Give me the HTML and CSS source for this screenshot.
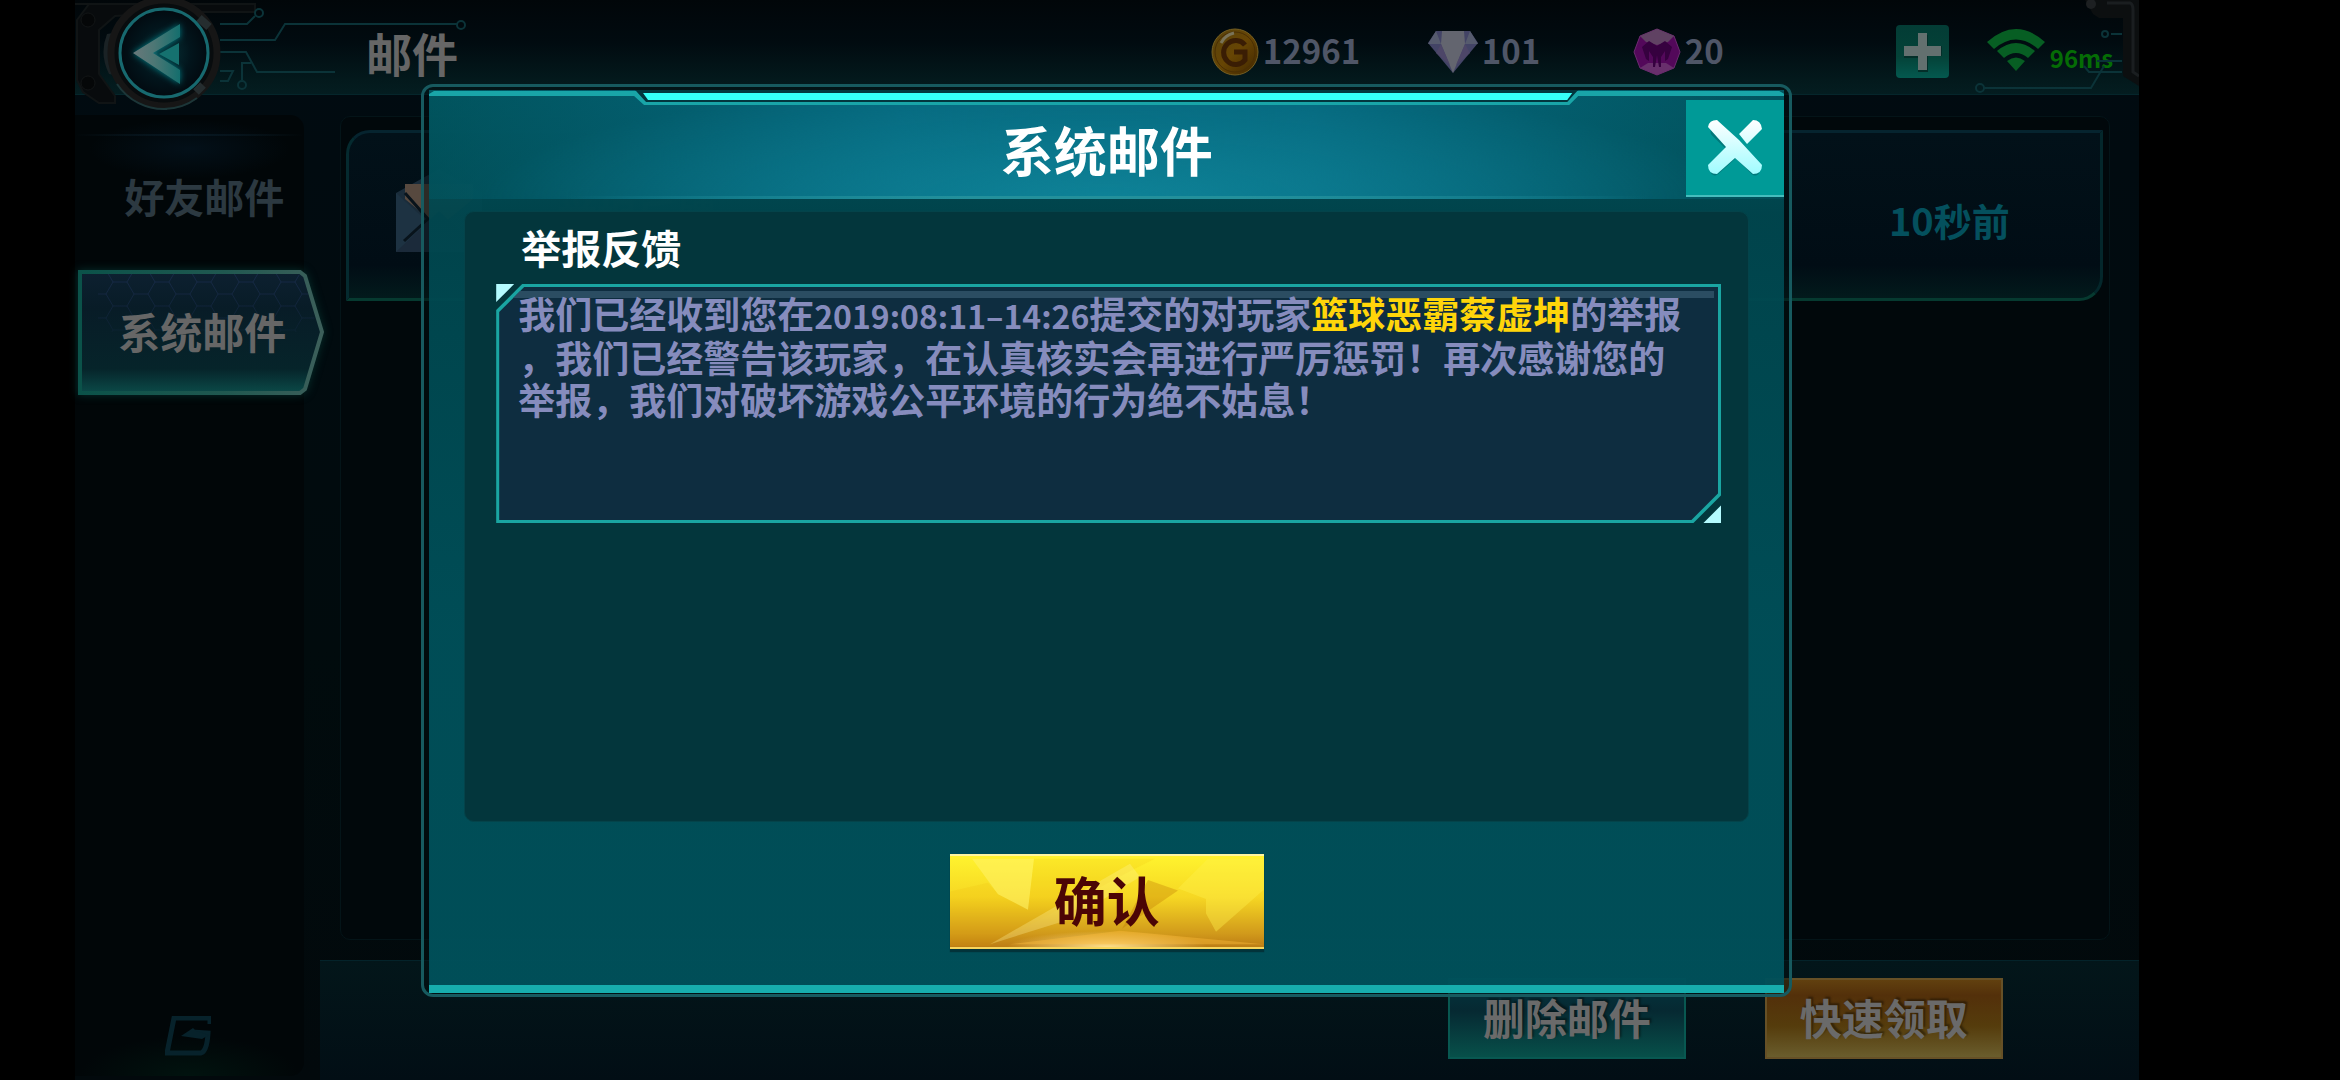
FILE: index.html
```html
<!DOCTYPE html>
<html lang="zh-CN">
<head>
<meta charset="utf-8">
<title>邮件</title>
<link rel="stylesheet" href="styles.css">
</head>
<body>
<div class="stage">
  <header class="topbar">
    <svg class="circuit" width="400" height="120" viewBox="0 0 400 120" fill="none" aria-hidden="true">
      <path d="M0 4H180V12H100L40 16L24 30V74L40 96V103H24L8 92L2 80V20L14 4Z" fill="#080b0d" stroke="#101415" stroke-width="2"/>
      <circle cx="13" cy="20" r="7" fill="#050708" stroke="#121516"/><circle cx="13" cy="83" r="7" fill="#050708" stroke="#121516"/>
      <path d="M145 24H172L180 16M145 40H200L210 24H382M145 52H171L182 72H260M176 63H167V80M145 71H158L153 81H145" stroke="#0b3338" stroke-width="2"/>
      <circle cx="184" cy="13" r="4" stroke="#0b3338" stroke-width="2"/><circle cx="386" cy="25" r="4" stroke="#0b3338" stroke-width="2"/><circle cx="167" cy="85" r="4" stroke="#0b3338" stroke-width="2"/>
    </svg>
    <button class="back" aria-label="返回">
      <svg width="124" height="112" viewBox="25 0 124 112" aria-hidden="true">
        <defs>
          <linearGradient id="arrow"><stop offset="0" stop-color="#69787a"/><stop offset=".45" stop-color="#4d7775"/><stop offset="1" stop-color="#146e6d"/></linearGradient>
          <radialGradient id="disc"><stop offset="0" stop-color="#06343a"/><stop offset=".6" stop-color="#02151c"/><stop offset="1" stop-color="#020a10"/></radialGradient>
          <filter id="glow" x="-30%" y="-30%" width="160%" height="160%"><feGaussianBlur stdDeviation="3"/></filter>
        </defs>
        <path d="M42 32L30 34Q22 54 32 74L42 76Z" fill="#1a2225"/>
        <circle cx="87" cy="53" r="53" fill="#080c0e" stroke="#161616" stroke-width="7"/>
        <path d="M87 109A56 56 0 0 0 120 98M40 84A56 56 0 0 0 90 109" fill="none" stroke="#1c3638" stroke-width="2"/>
        <path d="M122 18L132 27M119 92L126 85" stroke="#252d2f" stroke-width="8"/>
        <circle cx="87" cy="53" r="44" fill="url(#disc)" stroke="#17696f" stroke-width="3"/>
        <path d="M56 53L103 24V37L76 53L103 70V84Z" fill="#0a7c82" filter="url(#glow)"/>
        <path d="M56 53L103 24V37L76 53L103 70V84Z" fill="url(#arrow)"/>
        <path d="M82 54L102 43V65Z" fill="#15716f"/>
      </svg>
    </button>
    <h1 class="page-title">邮件</h1>
    <div class="stats">
      <div class="stat">
        <svg width="48" height="48" viewBox="0 0 48 48" aria-hidden="true">
          <defs><linearGradient id="coin" x2="1" y2="1"><stop offset="0" stop-color="#57430d"/><stop offset=".5" stop-color="#674504"/><stop offset="1" stop-color="#3f2600"/></linearGradient></defs>
          <circle cx="24" cy="24" r="23" fill="url(#coin)" stroke="#755f22"/><circle cx="24" cy="24" r="20" fill="none" stroke="#4a2f04"/>
          <path d="M34 17A12 12 0 1 0 34 32V24H23" fill="none" stroke="#3a1d04" stroke-width="5"/>
          <path d="M10 15Q14 7 23 5" fill="none" stroke="#797359" stroke-width="3"/>
        </svg>
        <span>12961</span>
      </div>
      <div class="stat">
        <svg width="50" height="42" viewBox="0 0 50 42" aria-hidden="true">
          <path d="M0 12L8 0H42L50 12L25 42Z" fill="#434466"/><path d="M14 0H36L37 13L25 42L13 13Z" fill="#63656f"/><path d="M8 0L13 13H0ZM42 0L37 13H50Z" fill="#565b6e"/><path d="M13 13L22 34L8 22ZM37 13L28 34L42 22Z" fill="#4d4668"/>
        </svg>
        <span>101</span>
      </div>
      <div class="stat">
        <svg width="48" height="48" viewBox="0 0 48 48" aria-hidden="true">
          <path d="M24 1L41 8L47 24L41 40L24 47L7 40L1 24L7 8Z" fill="#53085a" stroke="#6c2a70"/><path d="M24 1L41 8L35 14L24 17L13 14L7 8Z" fill="#604263"/><path d="M7 40L15 35H33L41 40L24 47Z" fill="#682f6c"/>
          <path d="M24 18L32 13L39 19L35 31L32 33V23L28 29V39H26L24 27L22 39H20V29L16 23V33L13 31L9 19L16 13Z" fill="#36013f"/>
        </svg>
        <span>20</span>
      </div>
      <button class="plus" aria-label="充值">
        <svg width="53" height="53" viewBox="0 0 53 53" aria-hidden="true"><path d="M22 10H32V21H46V31H32V47H22V33H8V24H22Z" fill="#032f29"/><path d="M22 8H31V21H45V31H31V45H22V31H8V21H22Z" fill="#63706f"/></svg>
      </button>
      <div class="signal">
        <svg width="58" height="42" viewBox="0 0 58 42" aria-hidden="true"><path d="M0 13Q29-13 58 13L51 20Q29 1 7 20ZM10 22Q29 6 48 22L41 29Q29 19 17 29ZM20 32Q29 25 38 32L29 42Z" fill="#075e23"/></svg>
        <span>96ms</span>
      </div>
    </div>
    <svg class="corner" width="170" height="95" viewBox="0 0 170 95" fill="none" aria-hidden="true">
      <path d="M15 88H122L135 66M142 34H153M115 66L120 72H153M128 61H153" stroke="#0b3338" stroke-width="2"/><circle cx="11" cy="88" r="4" stroke="#0b3338" stroke-width="2"/><circle cx="136" cy="34" r="3" stroke="#0b3338" stroke-width="2"/>
      <path d="M116 0H170V86L154 76V18H130L124 14Z" fill="#0c0f10"/><path d="M138 3H161Q164 4 164 10V72L170 76" stroke="#1a1e20" stroke-width="3"/><circle cx="122" cy="4" r="5" fill="#1d2022"/>
    </svg>
  </header>

  <div class="body">
    <nav class="sidebar">
      <a class="tab" href="#friends">好友邮件</a>
      <a class="tab tab-active" href="#system" aria-current="page">
        <svg viewBox="0 0 246 125" preserveAspectRatio="none" aria-hidden="true">
          <defs>
            <linearGradient id="tabfill" x2="0" y2="1"><stop offset="0" stop-color="#0d2030"/><stop offset=".3" stop-color="#081c27"/><stop offset=".8" stop-color="#06242a"/><stop offset="1" stop-color="#0b4a48"/></linearGradient>
            <linearGradient id="tabedge"><stop offset="0" stop-color="#0b5249"/><stop offset=".6" stop-color="#205850"/><stop offset="1" stop-color="#3c5f5a"/></linearGradient>
            <pattern id="hex" width="42" height="24" patternUnits="userSpaceOnUse"><path d="M0 12H7L14 0H28L35 12H42M7 12L14 24H28L35 12" fill="none" stroke="#182a48"/></pattern>
            <linearGradient id="fade" x2="0" y2="1"><stop offset="0" stop-color="#fff"/><stop offset=".7" stop-color="#000"/></linearGradient>
            <mask id="hexmask"><rect width="246" height="125" fill="url(#fade)"/></mask>
          </defs>
          <path d="M2 2H222L227 6L244 62L227 119L222 123H2Z" fill="url(#tabfill)"/>
          <path d="M20 4H220L226 8L240 62H20Z" fill="url(#hex)" mask="url(#hexmask)"/>
          <path d="M2 2H222L227 6L244 62L227 119L222 123H2Z" fill="none" stroke="url(#tabedge)" stroke-width="4"/>
        </svg>
        <span>系统邮件</span>
      </a>
      <svg class="mark" width="46" height="40" viewBox="0 0 46 40" fill="none" aria-hidden="true"><path d="M45 8V2H9L2 37H36Q42 35 43 17L27 16" stroke="#07222b" stroke-width="5"/><path d="M16 20L28 12L31 15L44 19L37 23Z" fill="#07222b"/></svg>
    </nav>
    <main class="content">
      <section class="list">
        <article class="mail">
          <svg class="envelope" width="86" height="86" viewBox="0 0 86 86" aria-hidden="true">
            <path d="M0 24L43 0L86 24V83H0Z" fill="#1a2c3a"/><path d="M9 15H77V30L43 58L9 30Z" fill="#57493f"/><path d="M0 24L33 54L0 83Z" fill="#1d3242"/><path d="M86 24L50 54L86 83Z" fill="#1d3242"/><path d="M0 83L43 42L86 83Z" fill="#1b2a3a"/><path d="M9 24L32 50L8 72" fill="none" stroke="#08131b" stroke-width="3"/>
          </svg>
          <h2 class="mail-title">举报反馈</h2>
          <time class="mail-time">10秒前</time>
        </article>
      </section>
      <footer class="actions">
        <button class="action action-delete">删除邮件</button>
        <button class="action action-claim">快速领取</button>
      </footer>
    </main>
  </div>
</div>

<div class="overlay">
  <section class="modal" role="dialog" aria-modal="true" aria-labelledby="dialog-title">
    <div class="modal-inner">
      <svg class="modal-edge" viewBox="0 0 1355 16" preserveAspectRatio="none" aria-hidden="true">
        <path d="M206 0H1149L1139 13H216Z" fill="#02363e"/>
        <path d="M0 6V4L5 1H207L217 12H1138L1148 1H1350L1355 4V6H1149L1140 15H215L205 6Z" fill="#19a5a8"/>
        <path d="M214 3H1143L1138 10H219Z" fill="#36fff8"/>
      </svg>
      <header class="modal-head">
        <h2 id="dialog-title">系统邮件</h2>
        <button class="close" aria-label="关闭">
          <svg width="54" height="56" viewBox="0 0 54 56" aria-hidden="true">
            <defs><linearGradient id="cross" gradientUnits="userSpaceOnUse" x1="0" y1="0" x2="0" y2="54"><stop offset="0" stop-color="#fff"/><stop offset="1" stop-color="#9ffcff"/></linearGradient></defs>
            <path d="M7 12L47 51M7 51L27 33" fill="none" stroke="#00787a" stroke-width="9" stroke-linecap="round"/>
            <path d="M0 7Q1 0 9 0L31 20L54 45Q54 54 45 54L27 38L9 54Q0 54 0 45L18 27ZM31 14L45 0Q53 0 54 9L39 24Z" fill="url(#cross)"/>
          </svg>
        </button>
      </header>
      <div class="letter">
        <h3>举报反馈</h3>
        <div class="message-frame">
          <p class="message">我们已经收到您在<span class="stamp">2019:08:11–14:26</span>提交的对玩家<strong>篮球恶霸蔡虚坤</strong>的举报<br>，我们已经警告该玩家，在认真核实会再进行严厉惩罚！再次感谢您的<br>举报，我们对破坏游戏公平环境的行为绝不姑息！</p>
        </div>
      </div>
      <button class="confirm">
        <svg viewBox="0 0 314 95" preserveAspectRatio="none" aria-hidden="true">
          <path d="M22 3H84L78 56L48 40Z" fill="#fff36a" opacity=".55"/><path d="M0 37L38 28L48 40L78 56L84 3H205L180 16L40 94H0Z" fill="#e8a800" opacity=".13"/>
          <path d="M40 92L180 8L190 22L120 66Z" fill="#fff6a0" opacity=".3"/><path d="M198 25L228 36L172 76Z" fill="#b96e00" opacity=".3"/><path d="M228 34L258 3H314V35L266 79L256 60V45Z" fill="#fff04a" opacity=".4"/><path d="M170 78L314 92H60Z" fill="#ffbf3d" opacity=".4"/>
        </svg>
        <span>确认</span>
      </button>
    </div>
  </section>
</div>
</body>
</html>
```
FILE: styles.css
```css
* {
  box-sizing: border-box;
  margin: 0;
}

body {
  background: #000;
  color: #fff;
  font-family: "Noto Sans CJK SC", "Noto Sans", sans-serif;
  font-weight: 700;
}

button {
  padding: 0;
  border: 0;
  background: none;
  color: inherit;
  font: inherit;
  cursor: pointer;
}

svg {
  display: block;
  flex-shrink: 0;
}

/* Dimmed mail screen */
.stage {
  display: flex;
  flex-direction: column;
  min-height: 100vh;
  margin: 0 8.6% 0 3.2%;
  background: linear-gradient(#010b11, #010b0d 60%, #02090c);
}

.topbar {
  position: relative;
  display: flex;
  align-items: center;
  height: 95px;
  padding: 0 26px 0 27px;
  border-bottom: 1px solid #05262b;
  background: linear-gradient(#010609, #010b10 45%, #03191c 85%, #041d20);
}

.circuit,
.corner {
  position: absolute;
  top: 0;
  left: 0;
}

.corner {
  right: 0;
  left: auto;
}

.back {
  position: relative;
  align-self: flex-start;
  width: 124px;
}

.page-title {
  position: relative;
  margin-left: 140px;
  padding-top: 10px;
  color: #666;
  font-size: 46px;
  line-height: 64px;
}

.stats {
  position: relative;
  display: grid;
  grid-template-columns: 217px 205px 263px 91px 126px;
  align-items: center;
  margin-left: auto;
  padding-top: 9px;
}

.stat {
  display: flex;
  align-items: center;
  gap: 4px;
  color: #4f5667;
  font-size: 33px;
  line-height: 48px;
}

.stat span {
  padding-bottom: 4px;
}

.plus {
  width: 53px;
  border-radius: 4px;
  background: linear-gradient(#033c35, #044238 60%, #04594f);
}

.signal {
  display: flex;
  align-items: flex-start;
  gap: 5px;
  color: #056c05;
}

.signal span {
  padding-top: 13px;
  font-size: 24px;
  line-height: 32px;
}

.body {
  display: grid;
  flex: 1;
  grid-template-columns: 229px 1fr;
}

.sidebar {
  display: flex;
  flex-direction: column;
  margin: 20px 0 4px;
  border-radius: 0 14px 14px 0;
  background:
    radial-gradient(ellipse 100px 30px at 50% 34px, #031019, transparent),
    radial-gradient(ellipse 110px 40px at 50% 100%, #01130f, transparent),
    linear-gradient(90deg, transparent, #0c202b 50%, transparent) 0 19px / 100% 2px no-repeat,
    #010608;
}

.tab {
  display: flex;
  align-items: center;
  justify-content: center;
  height: 121px;
  margin: 20px 0 14px;
  padding-left: 30px;
  color: #2c3941;
  font-size: 40px;
  line-height: 48px;
  text-decoration: none;
}

.tab-active {
  position: relative;
  width: 246px;
  height: 125px;
  margin: 0 0 0 3px;
  padding: 0 0 4px 3px;
  color: #666;
  font-size: 42px;
}

.tab-active svg {
  position: absolute;
  inset: 0;
  width: 100%;
  height: 100%;
  filter: drop-shadow(0 0 4px #052f2c);
}

.tab-active span {
  position: relative;
}

.mark {
  margin: auto 0 20px 90px;
}

.content {
  display: flex;
  flex-direction: column;
  margin-left: 16px;
}

.list {
  flex: 1;
  margin: 21px 29px 20px 20px;
  padding: 13px 6px 0 5px;
  border: 1px solid #041418;
  border-radius: 10px;
  background: #01080b;
}

.mail {
  display: flex;
  align-items: center;
  height: 171px;
  padding: 0 90px 0 47px;
  border: 3px solid;
  border-color: #06242f #04272b #063a30 #052a2f;
  border-radius: 24px 0 24px 0;
  background: linear-gradient(#021119, #010d15 80%, #021a1c);
}

.envelope {
  margin-bottom: 8px;
}

.mail-title {
  margin: 0 0 0 75px;
  color: #14191b;
  font-size: 40px;
  line-height: 48px;
}

.mail-time {
  margin-left: auto;
  padding-top: 8px;
  color: #04505d;
  font-size: 38px;
  line-height: 48px;
}

.actions {
  display: flex;
  align-items: flex-start;
  justify-content: flex-end;
  gap: 79px;
  height: 120px;
  padding: 17px 136px 0 0;
  border-top: 1px solid #04232a;
  background: linear-gradient(#03161a, #020e15);
}

.action {
  width: 238px;
  height: 81px;
  padding-bottom: 4px;
  border: 2px solid #085851;
  color: #6a6a6a;
  font-size: 42px;
  line-height: 64px;
  text-shadow: 2px -2px 2px #0006;
}

.action-delete {
  background: linear-gradient(#033540, #062932 40%, #07504a);
}

.action-claim {
  border-color: #665026;
  background: linear-gradient(#61400f, #53300a 20%, #553c0c 60%, #6a5d2d);
}

/* Dialog */
.overlay {
  position: absolute;
  top: 0;
  right: 0;
  left: 0;
  padding: 84px 23.4% 0 18%;
}

.modal {
  padding: 3px 5px 1px;
  border: 3px solid #175a5f;
  border-radius: 12px;
  background: #010d1080;
}

.modal-inner {
  position: relative;
  display: flex;
  flex-direction: column;
  align-items: center;
  padding-bottom: 36px;
  border-bottom: 8px solid #17adad;
  background: linear-gradient(#015661e8, #004951e8 14%, #00535de8 60%, #00525cf0);
}

.modal-edge {
  position: absolute;
  top: 0;
  left: 0;
  width: 100%;
  height: 16px;
}

.modal-head {
  display: grid;
  grid-template-columns: 98px 1fr 98px;
  align-self: stretch;
  height: 109px;
  padding: 10px 0 0;
  background:
    linear-gradient(90deg, transparent 10%, #23909b 40%, #23909b 60%, transparent 90%) 0 100% / 100% 3px no-repeat,
    radial-gradient(ellipse 46% 110% at 50% 100%, #0e8297, transparent),
    linear-gradient(90deg, #01586280, #05677d 35%, #05677d 65%, #01586280);
}

.modal-head h2 {
  grid-column: 2;
  font-size: 53px;
  line-height: 98px;
  text-align: center;
}

.close {
  display: grid;
  height: 97px;
  place-items: center;
  border-bottom: 2px solid #45bdbd;
  background: #009a97;
}

.letter {
  align-self: stretch;
  min-height: 611px;
  margin: 12px 35px 0;
  padding: 10px 27px 0 31px;
  border: 1px solid #04434a;
  border-radius: 10px;
  background: #03353cf8;
}

.letter h3 {
  padding-left: 25px;
  font-size: 40px;
  line-height: 50px;
}

.message-frame {
  position: relative;
  margin-top: 12px;
}

.message-frame::before,
.message-frame::after {
  position: absolute;
  width: 18px;
  height: 18px;
  background: #b4fbff;
  clip-path: polygon(0 0, 100% 0, 0 100%);
  content: "";
}

.message-frame::before {
  top: 0;
  left: 0;
}

.message-frame::after {
  right: 0;
  bottom: 0;
  clip-path: polygon(100% 0, 100% 100%, 0 100%);
}

.message {
  position: relative;
  z-index: 0;
  min-height: 239px;
  padding: 8px 10px 10px 22px;
  background: #1aa5a2;
  clip-path: polygon(26px 0, 100% 0, 100% calc(100% - 28px), calc(100% - 28px) 100%, 0 100%, 0 26px);
  color: #868cbd;
  font-size: 37px;
  line-height: 42px;
  white-space: nowrap;
}

.message::before {
  position: absolute;
  z-index: -1;
  inset: 3px;
  background: linear-gradient(#2b4d62, #2b4d62) 0 4px / calc(100% - 4px) 7px no-repeat, #0e2d40;
  clip-path: polygon(25px 0, 100% 0, 100% calc(100% - 27px), calc(100% - 27px) 100%, 0 100%, 0 25px);
  content: "";
}

.stamp {
  font-size: 32px;
}

.message strong {
  color: #ffd50a;
  font-weight: inherit;
}

.confirm {
  position: relative;
  width: 314px;
  height: 95px;
  margin-top: 32px;
  padding-bottom: 6px;
  border-top: 2px solid #fff5a0;
  border-bottom: 2px solid #f7d65c;
  background:
    radial-gradient(ellipse 100px 16px at 50% 100%, #ffdf8a, transparent),
    linear-gradient(#fff32e, #f6d723 45%, #d19a1b 85%, #bd7d15);
  box-shadow: 0 3px 1px #02333a;
  color: #4b0505;
  font-size: 53px;
  line-height: 72px;
}

.confirm svg {
  position: absolute;
  inset: 0;
  width: 100%;
  height: 100%;
}

.confirm span {
  position: relative;
}
```
